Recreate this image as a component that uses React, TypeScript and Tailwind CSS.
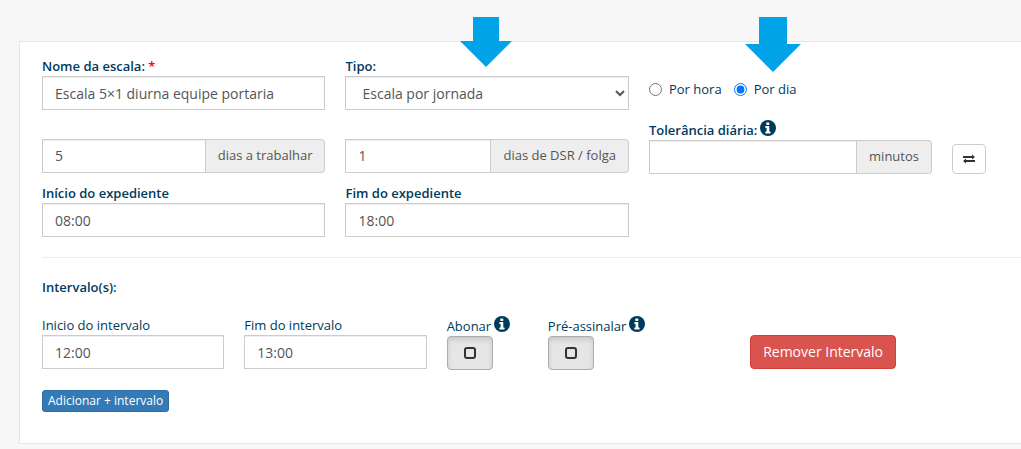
import { useState } from 'react';
import type { ReactNode } from 'react';

const inputClass =
  'block w-full h-[34px] px-3 text-sm text-[#555] bg-white border border-[#ccc] rounded-none shadow-[inset_0_1px_1px_rgba(0,0,0,0.075)] outline-none focus:border-[#66afe9]';

interface FieldProps {
  id: string;
  label: ReactNode;
  value: string;
  bold?: boolean;
}

function Field({ id, label, value, bold }: FieldProps) {
  return (
    <div className="min-w-0 pr-5">
      <label htmlFor={id} className={`block leading-[19px] ${bold ? 'font-semibold' : ''}`}>
        {label}
      </label>
      <input id={id} type="text" defaultValue={value} className={inputClass} />
    </div>
  );
}

interface AddonInputProps {
  id: string;
  addon: string;
  value?: string;
  ariaLabel?: string;
}

function AddonInput({ id, addon, value = '', ariaLabel }: AddonInputProps) {
  return (
    <div className="flex h-[34px] min-w-0 flex-1">
      <input
        id={id}
        type="text"
        defaultValue={value}
        aria-label={ariaLabel}
        className="w-full min-w-0 flex-1 px-3 text-sm text-[#555] bg-white border border-[#ccc] shadow-[inset_0_1px_1px_rgba(0,0,0,0.075)] outline-none focus:border-[#66afe9]"
      />
      <span className="flex items-center whitespace-nowrap px-3 text-[#555] bg-[#eee] border border-l-0 border-[#ccc] rounded-r">
        {addon}
      </span>
    </div>
  );
}

function InfoIcon() {
  return (
    <svg className="size-4 shrink-0" viewBox="0 0 16 16">
      <circle cx="8" cy="8" r="8" fill="#003a5d" />
      <path
        fill="#fff"
        d="M6.7 2.4h2.2q.4 0 .4.4v1.7q0 .4-.4.4H6.7q-.4 0-.4-.4V2.8q0-.4.4-.4zM5.7 6h3.2q.4 0 .4.4v5.1h.9q.4 0 .4.4v1.2q0 .4-.4.4H5.7q-.4 0-.4-.4v-1.2q0-.4.4-.4h.9V7.9h-.9q-.4 0-.4-.4V6.4q0-.4.4-.4z"
      />
    </svg>
  );
}

function Toggle({ id, label }: { id: string; label: string }) {
  return (
    <div className="min-w-0">
      <div className="flex h-5 items-start gap-[3px]">
        <label htmlFor={id} className="whitespace-nowrap leading-5">{label}</label>
        <InfoIcon />
      </div>
      <label
        htmlFor={id}
        className="flex h-[34px] w-[46px] cursor-pointer items-center justify-center rounded border border-[#adadad] bg-[#e6e6e6] shadow-[inset_0_3px_5px_rgba(0,0,0,0.125)]"
      >
        <input
          id={id}
          type="checkbox"
          className="size-3 cursor-pointer appearance-none rounded-[3px] border-2 border-[#333] checked:bg-[#333]"
        />
      </label>
    </div>
  );
}

function SwapIcon() {
  return (
    <svg className="h-2.5 w-3.5" viewBox="0 0 14 10" fill="#333">
      <path d="M1 2h9V.5L13 3l-3 2.500V4H1z" />
      <path d="M13 6H4V4.500L1 7l3 2.500V8h9z" />
    </svg>
  );
}

export default function App() {
  const [mode, setMode] = useState('dia');

  return (
    <div className="min-h-screen bg-[#f7f7f7] pt-[41px] pb-[5px] pl-[19px] font-['Open_Sans',sans-serif] text-[13px] text-[#003a5d]">
      <form className="border border-r-0 border-[#e7e7e7] bg-white pt-[15px] pb-[31px] pl-[22px]">
        <div className="grid grid-cols-[31fr_31fr_38fr]">
          <Field
            id="nome"
            bold
            label={<>Nome da escala: <span className="text-[#f00]">*</span></>}
            value="Escala 5×1 diurna equipe portaria"
          />

          <div className="relative min-w-0 pr-5">
            <label htmlFor="tipo" className="block font-semibold leading-[19px]">Tipo:</label>
            <select id="tipo" className={inputClass}>
              <option>Escala por jornada</option>
              <option>Escala semanal</option>
            </select>
            <svg className="absolute -top-10 left-[115px] h-[50px] w-[52px]" viewBox="0 0 52 50" fill="#00a2e8">
              <path d="M13 0h26v24h13L26 50 0 24h13z" />
            </svg>
          </div>

          <div className="relative flex min-w-0 items-center gap-3 pt-3">
            <label className="flex items-center gap-[7px]">
              <input
                type="radio"
                name="modo"
                className="size-[13px]"
                checked={mode === 'hora'}
                onChange={() => setMode('hora')}
              />
              Por hora
            </label>
            <label className="flex items-center gap-[7px]">
              <input
                type="radio"
                name="modo"
                className="size-[13px]"
                checked={mode === 'dia'}
                onChange={() => setMode('dia')}
              />
              Por dia
            </label>
            <svg className="absolute -top-10 left-24 h-[55px] w-[56px]" viewBox="0 0 56 55" fill="#00a2e8">
              <path d="M14 0h28v27h14L28 55 0 27h14z" />
            </svg>
          </div>
        </div>

        <div className="mt-2.5 grid grid-cols-[31fr_31fr_38fr]">
          <div className="flex min-w-0 pt-[19px] pr-5">
            <AddonInput id="trabalhar" addon="dias a trabalhar" value="5" ariaLabel="dias a trabalhar" />
          </div>
          <div className="flex min-w-0 pt-[19px] pr-5">
            <AddonInput id="folga" addon="dias de DSR / folga" value="1" ariaLabel="dias de DSR / folga" />
          </div>
          <div className="flex min-w-0 items-end gap-5 pr-[35px]">
            <div className="min-w-0 flex-1">
              <div className="flex h-5 items-start gap-[3px]">
                <label htmlFor="tolerancia" className="font-semibold leading-5">Tolerância diária:</label>
                <InfoIcon />
              </div>
              <AddonInput id="tolerancia" addon="minutos" />
            </div>
            <button
              type="button"
              aria-label="Alternar"
              className="flex h-[30px] w-[34px] items-center justify-center rounded border border-[#ccc] bg-white hover:bg-[#e6e6e6]"
            >
              <SwapIcon />
            </button>
          </div>
        </div>

        <div className="mt-2.5 grid grid-cols-[31fr_31fr_38fr]">
          <Field id="inicio" bold label="Início do expediente" value="08:00" />
          <Field id="fim" bold label="Fim do expediente" value="18:00" />
        </div>

        <hr className="my-5 border-[#eee]" />

        <h2 className="font-semibold leading-[19px]">Intervalo(s):</h2>

        <div className="mt-[19px] grid grid-cols-[62fr_62fr_31fr_62fr_83fr]">
          <Field id="inicio-intervalo" label="Inicio do intervalo" value="12:00" />
          <Field id="fim-intervalo" label="Fim do intervalo" value="13:00" />
          <Toggle id="abonar" label="Abonar" />
          <Toggle id="pre-assinalar" label="Pré-assinalar" />
          <div className="pt-[19px]">
            <button
              type="button"
              className="h-[34px] rounded border border-[#d43f3a] bg-[#d9534f] px-3 text-sm text-white hover:bg-[#c9302c]"
            >
              Remover Intervalo
            </button>
          </div>
        </div>

        <button
          type="button"
          className="mt-5 block h-[22px] rounded-[3px] border border-[#2e6da4] bg-[#337ab7] px-[5px] text-xs text-white hover:bg-[#286090]"
        >
          Adicionar + intervalo
        </button>
      </form>
    </div>
  );
}
